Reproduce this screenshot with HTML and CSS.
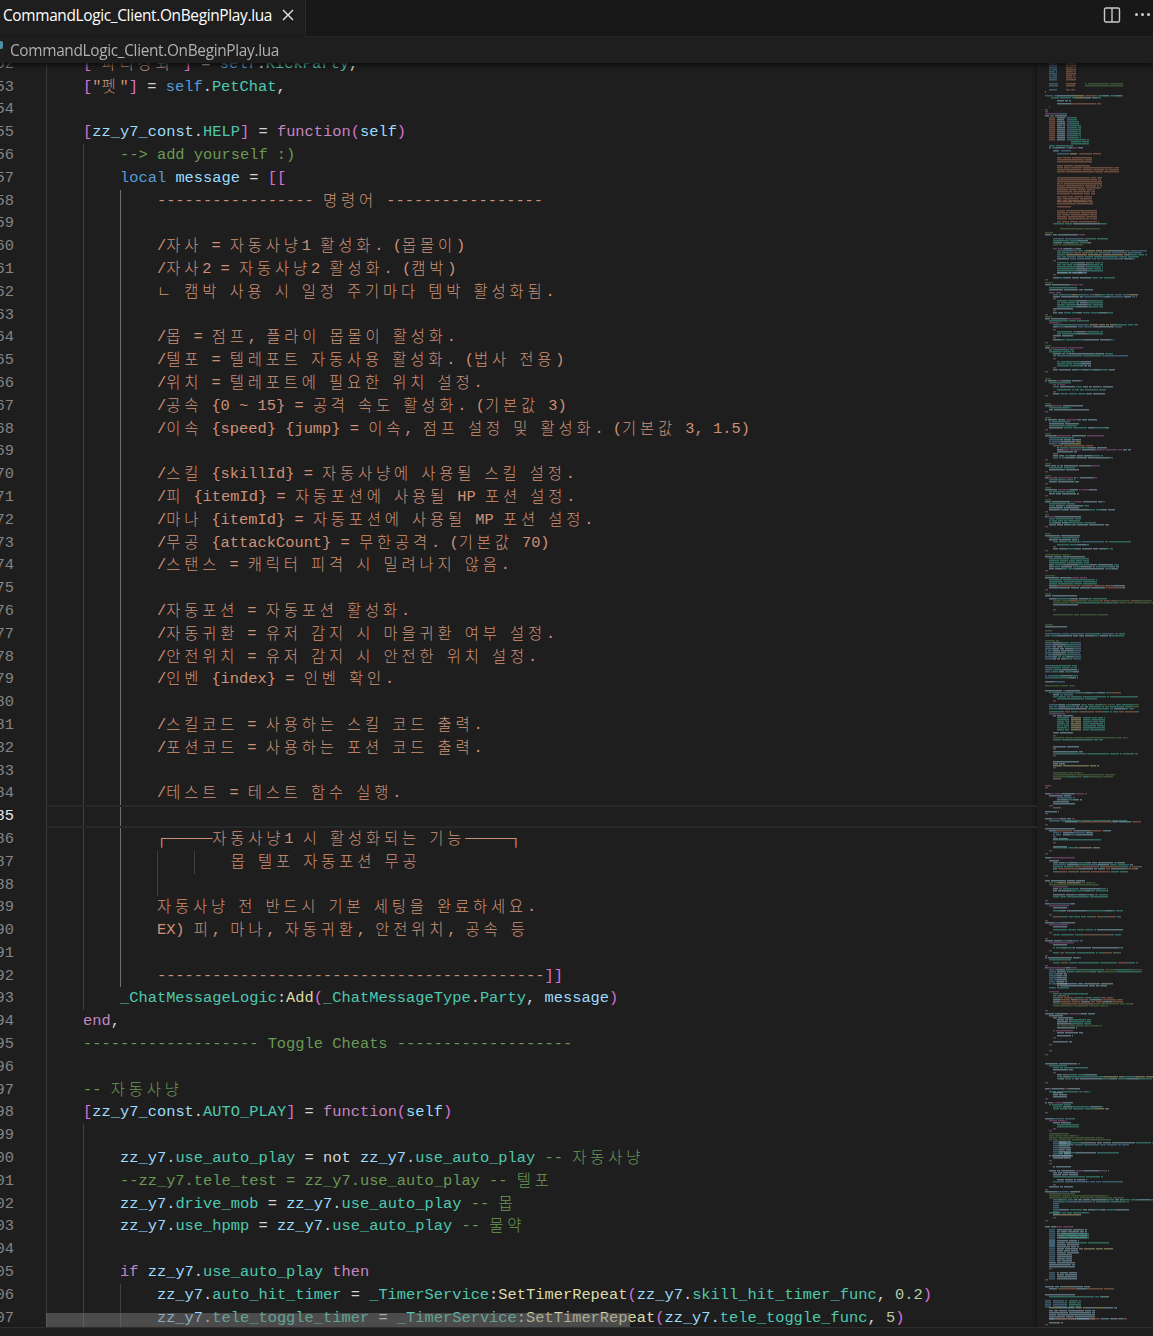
FILE: index.html
```html
<!DOCTYPE html>
<html lang="ko">
<head>
<meta charset="utf-8">
<title>CommandLogic_Client.OnBeginPlay.lua</title>
<link rel="stylesheet" href="styles.css">
</head>
<body>
<div class="app">
  <header class="tabbar">
    <div class="tab">
      <span class="tab-name">CommandLogic_Client.OnBeginPlay.lua</span>
      <svg class="tab-close" width="16" height="16" viewBox="0 0 16 16"><path d="M3 3 L13 13 M13 3 L3 13"/></svg>
    </div>
    <div class="tab-actions">
      <svg class="split" width="18" height="16" viewBox="0 0 18 16"><rect x="1.5" y="1" width="15" height="14" rx="1.5"/><path d="M9 1 V15"/></svg>
      <div class="more"><i></i><i></i><i></i></div>
    </div>
  </header>
  <nav class="crumbs"><span class="file-icon"></span><span>CommandLogic_Client.OnBeginPlay.lua</span></nav>
  <main class="editor">
    <div class="body">
      <div class="gutter">
        <div class="ln first">62</div><div class="ln">53</div><div class="ln">54</div><div class="ln">55</div><div class="ln">56</div><div class="ln">57</div><div class="ln">58</div><div class="ln">59</div><div class="ln">60</div><div class="ln">61</div><div class="ln">62</div><div class="ln">63</div><div class="ln">64</div><div class="ln">65</div><div class="ln">66</div><div class="ln">67</div><div class="ln">68</div><div class="ln">69</div><div class="ln">70</div><div class="ln">71</div><div class="ln">72</div><div class="ln">73</div><div class="ln">74</div><div class="ln">75</div><div class="ln">76</div><div class="ln">77</div><div class="ln">78</div><div class="ln">79</div><div class="ln">80</div><div class="ln">81</div><div class="ln">82</div><div class="ln">83</div><div class="ln">84</div><div class="ln now">85</div><div class="ln">86</div><div class="ln">87</div><div class="ln">88</div><div class="ln">89</div><div class="ln">90</div><div class="ln">91</div><div class="ln">92</div><div class="ln">93</div><div class="ln">94</div><div class="ln">95</div><div class="ln">96</div><div class="ln">97</div><div class="ln">98</div><div class="ln">99</div><div class="ln">00</div><div class="ln">01</div><div class="ln">02</div><div class="ln">03</div><div class="ln">04</div><div class="ln">05</div><div class="ln">06</div><div class="ln">07</div>
      </div>
      <div class="code">
<div class="l first">    <b class="br">[</b><s>"<i class="k">파티강퇴</i>"</s><b class="br">]</b> = <u>self</u>.<em>KickParty</em>,</div>
<div class="l">    <b class="br">[</b><s>"<i class="k">펫</i>"</s><b class="br">]</b> = <u>self</u>.<em>PetChat</em>,</div>
<div class="l"> </div>
<div class="l">    <b class="br">[</b><var>zz_y7_const</var>.<em>HELP</em><b class="br">]</b> = <q>function</q><b class="br">(</b><var>self</var><b class="br">)</b></div>
<div class="l g1">        <small>--&gt; add yourself :)</small></div>
<div class="l g1">        <u>local</u> <var>message</var> = <s class="br">[[</s></div>
<div class="l g2"><s>            ----------------- <i class="k">명령어</i> -----------------</s></div>
<div class="l g2"> </div>
<div class="l g2"><s>            /<i class="k">자사</i> = <i class="k">자동사냥</i>1 <i class="k">활성화</i>. (<i class="k">몹몰이</i>)</s></div>
<div class="l g2"><s>            /<i class="k">자사</i>2 = <i class="k">자동사냥</i>2 <i class="k">활성화</i>. (<i class="k">캠박</i>)</s></div>
<div class="l g2"><s>            <i class="k">ㄴ</i> <i class="k">캠박</i> <i class="k">사용</i> <i class="k">시</i> <i class="k">일정</i> <i class="k">주기마다</i> <i class="k">템박</i> <i class="k">활성화됨</i>.</s></div>
<div class="l g2"> </div>
<div class="l g2"><s>            /<i class="k">몹</i> = <i class="k">점프</i>, <i class="k">플라이</i> <i class="k">몹몰이</i> <i class="k">활성화</i>.</s></div>
<div class="l g2"><s>            /<i class="k">텔포</i> = <i class="k">텔레포트</i> <i class="k">자동사용</i> <i class="k">활성화</i>. (<i class="k">법사</i> <i class="k">전용</i>)</s></div>
<div class="l g2"><s>            /<i class="k">위치</i> = <i class="k">텔레포트에</i> <i class="k">필요한</i> <i class="k">위치</i> <i class="k">설정</i>.</s></div>
<div class="l g2"><s>            /<i class="k">공속</i> {0 ~ 15} = <i class="k">공격</i> <i class="k">속도</i> <i class="k">활성화</i>. (<i class="k">기본값</i> 3)</s></div>
<div class="l g2"><s>            /<i class="k">이속</i> {speed} {jump} = <i class="k">이속</i>, <i class="k">점프</i> <i class="k">설정</i> <i class="k">및</i> <i class="k">활성화</i>. (<i class="k">기본값</i> 3, 1.5)</s></div>
<div class="l g2"> </div>
<div class="l g2"><s>            /<i class="k">스킬</i> {skillId} = <i class="k">자동사냥에</i> <i class="k">사용될</i> <i class="k">스킬</i> <i class="k">설정</i>.</s></div>
<div class="l g2"><s>            /<i class="k">피</i> {itemId} = <i class="k">자동포션에</i> <i class="k">사용될</i> HP <i class="k">포션</i> <i class="k">설정</i>.</s></div>
<div class="l g2"><s>            /<i class="k">마나</i> {itemId} = <i class="k">자동포션에</i> <i class="k">사용될</i> MP <i class="k">포션</i> <i class="k">설정</i>.</s></div>
<div class="l g2"><s>            /<i class="k">무공</i> {attackCount} = <i class="k">무한공격</i>. (<i class="k">기본값</i> 70)</s></div>
<div class="l g2"><s>            /<i class="k">스탠스</i> = <i class="k">캐릭터</i> <i class="k">피격</i> <i class="k">시</i> <i class="k">밀려나지</i> <i class="k">않음</i>.</s></div>
<div class="l g2"> </div>
<div class="l g2"><s>            /<i class="k">자동포션</i> = <i class="k">자동포션</i> <i class="k">활성화</i>.</s></div>
<div class="l g2"><s>            /<i class="k">자동귀환</i> = <i class="k">유저</i> <i class="k">감지</i> <i class="k">시</i> <i class="k">마을귀환</i> <i class="k">여부</i> <i class="k">설정</i>.</s></div>
<div class="l g2"><s>            /<i class="k">안전위치</i> = <i class="k">유저</i> <i class="k">감지</i> <i class="k">시</i> <i class="k">안전한</i> <i class="k">위치</i> <i class="k">설정</i>.</s></div>
<div class="l g2"><s>            /<i class="k">인벤</i> {index} = <i class="k">인벤</i> <i class="k">확인</i>.</s></div>
<div class="l g2"> </div>
<div class="l g2"><s>            /<i class="k">스킬코드</i> = <i class="k">사용하는</i> <i class="k">스킬</i> <i class="k">코드</i> <i class="k">출력</i>.</s></div>
<div class="l g2"><s>            /<i class="k">포션코드</i> = <i class="k">사용하는</i> <i class="k">포션</i> <i class="k">코드</i> <i class="k">출력</i>.</s></div>
<div class="l g2"> </div>
<div class="l g2"><s>            /<i class="k">테스트</i> = <i class="k">테스트</i> <i class="k">함수</i> <i class="k">실행</i>.</s></div>
<div class="l g2 active"> </div>
<div class="l g2"><s>            ┌─────<i class="k">자동사냥</i>1 <i class="k">시</i> <i class="k">활성화되는</i> <i class="k">기능</i>─────┐</s></div>
<div class="l g4"><s>                    <i class="k">몹</i> <i class="k">텔포</i> <i class="k">자동포션</i> <i class="k">무공</i></s></div>
<div class="l g3"> </div>
<div class="l g2"><s>            <i class="k">자동사냥</i> <i class="k">전</i> <i class="k">반드시</i> <i class="k">기본</i> <i class="k">세팅을</i> <i class="k">완료하세요</i>.</s></div>
<div class="l g2"><s>            EX) <i class="k">피</i>, <i class="k">마나</i>, <i class="k">자동귀환</i>, <i class="k">안전위치</i>, <i class="k">공속</i> <i class="k">등</i></s></div>
<div class="l g2"> </div>
<div class="l g2"><s>            ------------------------------------------</s><s class="br">]]</s></div>
<div class="l g1">        <em>_ChatMessageLogic</em>:<mark>Add</mark><b class="br">(</b><em>_ChatMessageType</em>.<em>Party</em>, <var>message</var><b class="br">)</b></div>
<div class="l">    <q>end</q>,</div>
<div class="l">    <small>------------------- Toggle Cheats -------------------</small></div>
<div class="l"> </div>
<div class="l">    <small>-- <i class="k">자동사냥</i></small></div>
<div class="l">    <b class="br">[</b><var>zz_y7_const</var>.<em>AUTO_PLAY</em><b class="br">]</b> = <q>function</q><b class="br">(</b><var>self</var><b class="br">)</b></div>
<div class="l g1"> </div>
<div class="l g1">        <var>zz_y7</var>.<em>use_auto_play</em> = not <var>zz_y7</var>.<em>use_auto_play</em> <small>-- <i class="k">자동사냥</i></small></div>
<div class="l g1">        <small>--zz_y7.tele_test = zz_y7.use_auto_play -- <i class="k">텔포</i></small></div>
<div class="l g1">        <var>zz_y7</var>.<em>drive_mob</em> = <var>zz_y7</var>.<em>use_auto_play</em> <small>-- <i class="k">몹</i></small></div>
<div class="l g1">        <var>zz_y7</var>.<em>use_hpmp</em> = <var>zz_y7</var>.<em>use_auto_play</em> <small>-- <i class="k">물약</i></small></div>
<div class="l g1"> </div>
<div class="l g1">        <q>if</q> <var>zz_y7</var>.<em>use_auto_play</em> <q>then</q></div>
<div class="l g5">            <var>zz_y7</var>.<em>auto_hit_timer</em> = <em>_TimerService</em>:<mark>SetTimerRepeat</mark><b class="br">(</b><var>zz_y7</var>.<em>skill_hit_timer_func</em>, <dfn>0.2</dfn><b class="br">)</b></div>
<div class="l g5">            <var>zz_y7</var>.<em>tele_toggle_timer</em> = <em>_TimerService</em>:<mark>SetTimerRepeat</mark><b class="br">(</b><var>zz_y7</var>.<em>tele_toggle_func</em>, <dfn>5</dfn><b class="br">)</b></div>
      </div>
      <div class="scrollbar-h"></div>
    </div>
    <aside class="minimap"><canvas id="minimap" width="116" height="1264"></canvas></aside>
  </main>
  <footer class="status"></footer>
</div>
<script src="minimap.js"></script>
</body>
</html>
```

FILE: styles.css
```css
* { box-sizing: border-box; }
html, body { margin: 0; height: 100%; background: #1e1e1e; overflow: hidden; }
.app { height: 1336px; display: flex; flex-direction: column; font-family: "Open Sans", "Noto Sans", sans-serif; }

.tabbar { height: 37px; flex: none; display: flex; justify-content: space-between; background: #181818; border-bottom: 1px solid #2b2b2b; }
.tab { width: 306px; display: flex; align-items: center; gap: 8px; padding: 0 0 7px 3px; background: #1e1e1e; border-right: 1px solid #2b2b2b; margin-bottom: -1px; }
.tab-name { color: #ffffff; font-size: 15.4px; letter-spacing: -0.33px; white-space: nowrap; font-family: "Open Sans", sans-serif; }
.tab-close path { stroke: #e6e6e6; stroke-width: 1.4; fill: none; }
.tab-actions { display: flex; align-items: center; gap: 14px; padding-right: 3px; padding-bottom: 7px; }
.split rect, .split path { fill: none; stroke: #c9c9c9; stroke-width: 1.4; }
.more { display: flex; gap: 3px; }
.more i { width: 3px; height: 3px; border-radius: 50%; background: #d0d0d0; }

.crumbs { height: 26px; flex: none; display: flex; align-items: center; gap: 7px; background: #1e1e1e; color: #b0b0b0; font-size: 15.4px; letter-spacing: -0.33px; position: relative; z-index: 2; box-shadow: 0 2px 5px #0c0c0c; }
.file-icon { width: 3px; height: 8px; background: #4f8fa8; border-radius: 0 2px 2px 0; margin-top: -10px; }

.editor { flex: 1; min-height: 0; display: flex; overflow: hidden; background: #1e1e1e; border-bottom: 1px solid #2e2e2e; }
.body { flex: 1; min-width: 0; position: relative; display: flex; overflow: hidden; box-shadow: inset -2px 0 3px #161616; }

.gutter { width: 47px; flex: none; font: 15.38px/22.81px "Liberation Mono", monospace; color: #858585; }
.ln { height: 22.81px; width: 14px; display: flex; justify-content: flex-end; }
.ln.first, .l.first { margin-top: -10.2px; }
.ln.now { color: #e8e8e8; }

.code { flex: 1; min-width: 0; border-left: 1px solid #3a3a3a; margin-left: -1px; font: 15.38px/22.81px "Liberation Mono", "Noto Sans CJK KR", monospace; color: #d4d4d4; font-variant-ligatures: none; }
.l { height: 22.81px; white-space: pre; text-indent: -0.8px; background-repeat: no-repeat; }
.l.g1 { background-image: linear-gradient(#404040, #404040); background-size: 1px 100%; background-position: 36px 0; }
.l.g2, .l.g3, .l.g4 { background-image: linear-gradient(#404040, #404040), linear-gradient(#707070, #707070), linear-gradient(#404040, #404040), linear-gradient(#404040, #404040); background-size: 1px 100%, 1px 100%, 0 0, 0 0; background-position: 36px 0, 73px 0, 110px 0, 147px 0; }
.l.g3 { background-size: 1px 100%, 1px 100%, 1px 100%, 0 0; }
.l.g4 { background-size: 1px 100%, 1px 100%, 1px 100%, 1px 100%; }
.l.g5 { background-image: linear-gradient(#404040, #404040), linear-gradient(#404040, #404040); background-size: 1px 100%, 1px 100%; background-position: 36px 0, 73px 0; }
.l.active { box-shadow: inset 0 2px 0 #282828, inset 0 -2px 0 #282828; }

.k { font-family: "Noto Sans CJK KR", sans-serif; font-style: normal; font-weight: 300; letter-spacing: 3.85px; line-height: 0; vertical-align: -1px; }
.l s, .l b, .l em, .l u, .l q, .l var, .l small, .l mark, .l dfn { text-decoration: none; font-style: normal; font-weight: normal; font-size: inherit; background: none; quotes: none; }
.l q::before, .l q::after { content: none; }
.l s { color: #ce9178; }
.l b.br, .l s.br { color: #da70d6; }
.l em { color: #4ec9b0; }
.l u { color: #569cd6; }
.l q { color: #c586c0; }
.l var { color: #9cdcfe; }
.l small { color: #6a9955; }
.l mark { color: #dcdcaa; }
.l dfn { color: #b5cea8; }

.scrollbar-h { position: absolute; left: 46px; bottom: 0; width: 584px; height: 14px; background: rgba(121, 121, 121, 0.5); }

.minimap { width: 116px; flex: none; overflow: hidden; background: #1e1e1e; }
.minimap canvas { display: block; filter: blur(0.4px); }

.status { height: 8px; flex: none; background: #1e1e1e; }
```

FILE: minimap.js
```js
// Draws the editor's minimap overview: each row is "y x width rows colours".
var spec = `
63 4 8 5 b|63 21 10 5 r|73 4 8 4 b|73 21 10 4 r|83 4 9 2 b|83 21 10 2 r|83 40 38 2 g|89 4 8 1 b|89 21 9 1 r
91 0 1 1 w|95 0 28 1 bw|95 28 30 1 yrt|95 58 20 1 wt|97 6 24 1 t|97 30 8 1 y|97 38 18 1 wt|100 12 14 1 w|103 12 14 1 w|103 26 30 1 r
106 4 1 1 d|109 0 3 2 p
113 0 22 1 pb|115 0 22 1 wt
117 4 6 12 r|117 12 8 12 w|117 22 4 12 b|117 26 6 2 t|121 26 8 2 t|125 26 10 4 t|133 26 10 3 t|139 26 18 3 t|145 4 24 1 t
147 4 20 1 wb|147 24 14 1 wp|150 8 6 1 w|150 16 10 1 b|153 12 12 1 b|153 25 7 1 y|153 34 22 1 r
157 12 35 1 r|159 12 35 2 r|165 12 33 1 r|167 12 62 3 r|177 12 45 6 r|189 12 38 3 r|196 12 35 3 r|201 12 36 2 r|206 12 14 1 r|210 12 40 2 r|214 12 40 3 r|221 12 42 1 r
223 8 20 1 t|223 28 12 1 w|223 40 22 1 wt|228 15 40 1 g|232 0 8 1 g|234 0 40 1 wp
238 8 55 1 bt|240 8 35 1 tw|242 8 38 1 tw|244 8 30 1 g|248 8 28 1 pw
250 12 30 1 bt|250 42 25 1 y|250 67 35 1 wb|252 12 85 1 tbr|254 12 90 1 tyw|256 12 82 1 bt|258 12 78 1 wb
260 8 3 1 p|262 12 20 6 t|262 32 10 6 w|262 42 16 5 t|272 12 25 1 w|274 8 3 1 p|277 8 62 1 wt|279 0 3 1 p
282 0 8 1 g|284 0 38 1 wp|287 4 28 1 t|289 4 44 1 w|292 4 12 1 p|294 8 85 1 tby|296 8 84 1 wb|298 8 3 1 p
300 12 20 4 t|300 32 10 4 w|300 42 16 4 t|308 8 20 1 w|310 8 3 1 p|312 8 60 1 wt|314 0 3 1 p
316 0 8 1 g|318 0 36 1 wp|320 4 40 1 t|322 4 12 1 p|324 8 85 1 tby|326 8 70 1 wb|329 8 3 1 p
331 12 20 2 t|331 32 10 2 w|331 42 16 2 t|335 8 20 1 w|337 8 3 1 p|339 8 62 1 wt|342 0 3 1 p
345 0 6 1 g|347 0 38 1 wp|349 4 25 2 t|353 8 60 1 wt|355 8 75 1 tb|358 8 3 1 p|361 12 24 3 t|361 36 10 3 w|367 8 3 1 p|369 8 62 1 wt|371 0 3 1 p
378 0 6 1 g|380 0 38 1 wp|382 4 22 1 t|384 8 12 1 p|386 8 60 1 tw|389 12 50 1 t|391 8 3 1 p|393 8 52 1 wt|395 0 3 1 p
403 0 6 1 g|405 0 38 1 wp|407 4 22 1 t|409 4 40 1 w|411 0 3 1 p
417 0 6 1 g|419 0 52 1 wp|421 4 22 1 t|423 4 30 1 w|425 4 28 1 t|427 4 60 1 wt|429 0 3 1 p
433 0 6 1 g|435 0 60 1 wp|437 4 25 1 t|439 4 12 3 b|439 16 20 3 wy|445 8 40 1 r|447 12 50 1 wt|449 12 75 1 wp|451 12 20 1 w|453 8 5 1 d|455 8 50 1 wt|457 8 60 1 tw|459 0 3 1 p
463 0 6 1 g|465 0 55 1 wp|467 4 26 1 t|469 4 30 1 w|471 0 3 1 p
475 0 6 1 g|477 0 52 1 wp|479 4 26 1 t|481 4 30 1 w|483 0 3 1 p
487 0 6 1 g|489 0 52 1 wp|491 4 26 1 t|493 4 30 1 w|495 0 3 1 p
499 0 6 1 g|501 0 60 1 wp|503 4 26 1 t|505 4 40 1 tw|507 4 30 1 w|509 4 66 1 wt|511 0 3 1 p
514 0 4 1 g|516 0 36 1 wp|518 4 32 2 t|522 4 48 1 tw|524 4 60 1 wt|526 0 3 1 p
533 0 6 1 g|535 0 35 1 wp|537 4 30 1 t|539 4 30 1 w|541 8 78 1 tb|544 12 32 1 tw|546 8 3 1 p|548 8 60 1 wt|550 0 3 1 p
554 0 26 1 g|556 0 40 1 wp|558 4 40 3 t|564 4 70 3 wt|570 0 3 1 p
575 0 10 1 g|577 0 42 1 wp|579 4 48 3 t|585 4 76 2 wr|589 0 3 1 p
593 0 6 1 g|595 0 32 1 wp|598 4 58 1 wt|600 8 115 1 gr|602 8 110 1 gt|604 8 25 1 wr|609 8 3 1 p
614 8 55 1 g|624 0 8 1 g|626 0 22 1 w|630 0 7 1 g|633 0 80 1 bt|635 0 80 1 tw
640 0 14 1 g|642 0 8 9 b|642 8 20 9 wt|642 28 8 9 b|665 0 8 2 b|665 8 24 2 t|669 0 8 2 b|669 8 26 2 tw|675 0 8 2 b|675 8 25 2 tw|681 0 20 1 wb|685 0 30 1 g
690 0 35 1 wp|692 4 60 1 tw|692 64 12 1 r|694 8 20 1 wb|696 8 85 1 t|698 12 40 1 ty|700 8 3 1 p
704 4 10 2 b|704 14 30 2 wt|704 44 50 2 tg|708 4 85 1 tw|711 4 90 1 tr|713 4 16 1 p|715 8 20 1 w|717 12 12 7 t|717 26 10 7 y|717 38 22 7 t|732 8 20 1 w|735 8 3 1 p|737 8 75 1 g|739 8 50 1 t
746 8 26 1 w|748 8 3 1 d|751 8 30 1 w|753 8 85 1 t|755 8 3 1 p|761 8 26 1 w|763 8 12 1 w|765 8 46 1 y|767 8 3 1 p
772 8 30 1 g|774 8 62 1 g|776 8 60 1 gt|778 8 8 1 d|785 0 6 1 p|787 0 3 1 p
793 0 42 1 wp|795 4 22 1 w|797 12 18 1 b|799 12 25 1 wt|801 8 16 1 wb|803 8 22 1 w|805 4 4 1 p|807 8 8 1 d
811 0 14 1 w|813 0 3 1 p
818 0 30 1 wp|820 4 78 1 t|821 20 76 1 wr|824 0 3 1 p
828 0 30 1 wp|830 4 62 1 wr|832 8 8 2 b|832 18 30 2 wb|836 8 3 1 p|838 8 15 1 w|839 8 48 1 ty|842 8 3 1 p|846 8 14 1 w|847 8 48 1 ty|850 4 3 1 p|853 0 3 1 p
857 0 30 1 wp|860 4 10 1 w|862 8 72 1 wt|864 8 80 1 bwt|866 8 90 1 tr|868 8 85 1 wr|871 8 75 1 tr|875 0 3 1 p
880 0 40 1 wb|882 4 46 1 gy|884 4 50 1 g|886 8 15 1 p|888 8 55 1 wt|890 8 55 1 wt|894 8 55 1 wt|896 8 55 1 t|900 0 3 1 p
903 0 30 1 wb|905 4 20 1 p|907 8 14 1 w|910 8 70 1 tw|914 4 3 1 p|916 8 68 1 tr|920 0 3 1 p
922 0 30 1 wb|924 4 20 1 p|926 8 14 1 w|929 8 70 1 tw|932 4 3 1 p|934 8 68 1 tr|938 0 3 1 p
940 0 38 1 wb|942 4 26 1 p|944 8 14 1 w|947 8 70 1 tw|950 4 3 1 p|952 8 68 1 tr|955 0 3 1 p
957 0 36 1 wb|959 4 22 1 t|962 8 85 1 tr|965 0 3 1 p
967 0 32 1 wp|969 4 8 8 b|969 12 10 8 w|969 22 75 2 tg|983 12 56 1 yw|985 12 50 1 w|987 4 20 1 t|991 4 10 1 p|993 8 35 1 t|995 8 16 1 d|997 8 60 1 tr|999 8 70 1 wr|1001 8 70 1 wr|1003 8 80 1 gr|1005 8 55 1 g|1010 0 3 1 p
1013 0 50 1 wp|1015 4 14 1 wp|1017 8 20 1 w|1019 12 14 3 w|1019 26 20 3 t|1025 12 45 1 g|1027 12 20 1 w|1030 8 20 1 p|1032 12 26 1 w|1035 12 16 1 w|1037 8 3 1 p|1041 8 20 1 w|1044 4 3 1 p|1050 4 3 1 p|1054 0 3 1 p
1063 0 35 1 wb|1065 4 18 1 t|1067 8 36 1 t|1069 8 20 1 w|1072 8 3 1 p|1074 12 40 1 wt|1076 12 100 1 ty|1078 12 100 1 tw|1082 0 3 1 p
1088 0 35 1 wp|1091 4 42 1 tp|1092 8 10 1 w|1094 8 14 2 w|1098 0 3 1 p
1102 0 28 1 wp|1104 4 22 1 t|1106 8 50 1 tw|1108 8 56 1 ty|1112 0 3 1 p
1118 0 30 1 wb|1120 4 18 1 p|1122 8 18 1 w|1124 12 22 2 t|1128 8 3 1 p|1130 4 3 1 p
1133 4 20 1 g|1135 4 30 1 g|1137 4 55 1 g|1139 4 62 1 g|1141 8 6 9 b|1141 14 12 9 w|1142 14 100 1 wt|1144 14 70 1 tb|1152 14 60 1 tw|1155 4 24 1 w|1157 8 14 1 d|1160 4 3 1 p
1163 4 3 1 p|1166 8 18 1 w|1170 4 60 1 wp|1172 8 25 2 w|1176 8 50 1 t|1179 12 30 1 w|1181 8 70 1 b|1184 8 3 1 p|1186 4 24 1 w|1189 0 3 1 p
1191 0 35 1 wb|1193 4 26 1 g|1195 4 60 1 g|1197 4 75 1 g|1199 8 6 8 b|1199 14 100 1 wt|1201 14 70 1 tb|1209 14 70 1 wt|1212 4 40 1 t|1214 8 28 1 y|1217 8 3 1 p|1220 0 3 1 p
1226 0 28 1 wp|1229 4 6 9 b|1229 12 30 5 w|1233 14 30 3 t|1240 4 6 7 b|1240 12 22 7 w|1242 34 30 1 t|1248 34 35 1 y|1254 4 6 4 b|1254 12 15 4 w|1262 4 26 3 w|1268 4 3 1 p|1272 4 6 4 b|1272 12 20 4 w|1279 0 3 1 d
1286 0 45 1 wy|1288 4 65 1 wr|1294 0 30 1 wb|1296 4 60 1 tw|1300 0 6 4 b|1300 8 14 4 b|1300 24 12 4 t|1307 4 68 1 wy|1310 4 46 5 w|1318 4 78 1 wr|1322 4 14 1 w|1324 0 3 1 p
`;

var palette = { b: "#4d7a96", w: "#7fa3b5", t: "#3d8f80", r: "#96664f", g: "#4f6e42", p: "#85507f", y: "#a09c72", d: "#777777" };
var canvas = document.getElementById("minimap");
var ctx = canvas.getContext("2d");
var seed = 7;
function rnd(n) { seed = (seed * 1103515245 + 12345) & 2147483647; return (seed >> 12) % n; }

ctx.globalAlpha = 0.62;
spec.trim().split(/[|\n]/).forEach(function (item) {
  var a = item.trim().split(" ");
  var y = +a[0] - 63, x = +a[1] + 8, w = +a[2], rows = +a[3], cols = a[4];
  for (var r = 0; r < rows; r++) {
    var cx = 0, c = 0;
    while (cx < w) {
      var len = Math.min(2 + rnd(7), w - cx);
      ctx.fillStyle = palette[cols[c % cols.length]];
      ctx.fillRect(x + cx, y + r * 2, len, 1.5);
      cx += len + (w > 6 && rnd(3) === 0 ? 1 : 0);
      if (rnd(3) === 0) c++;
    }
  }
});
```
